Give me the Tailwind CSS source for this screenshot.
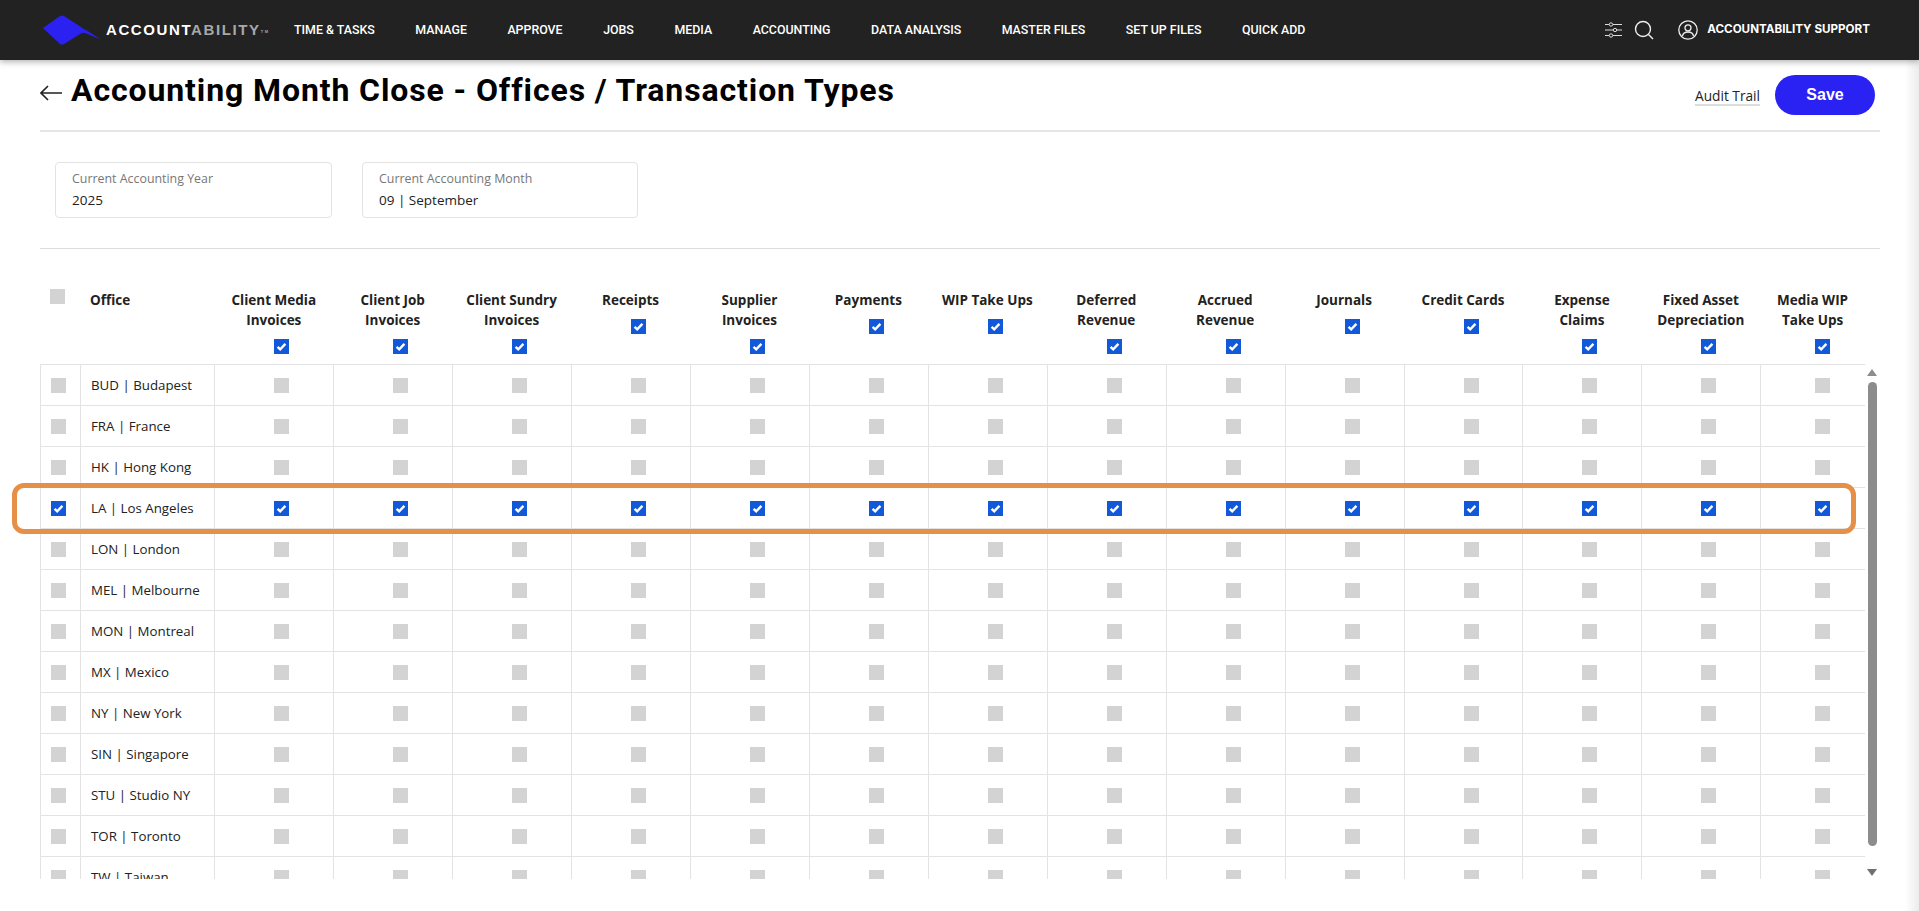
<!DOCTYPE html>
<html lang="en"><head><meta charset="utf-8"><title>Accounting Month Close</title>
<script src="https://cdn.jsdelivr.net/npm/@tailwindcss/browser@4"></script></head>
<body class="bg-white">
<svg class="hidden"><symbol id="c" viewBox="0 0 15 15"><rect width="15" height="15" fill="#1259d9"/><path d="M3.6 7.8 6.2 10.3 11.4 4.9" fill="none" stroke="#fff" stroke-width="2.4"/></symbol></svg>
<div class="relative h-[911px] w-full overflow-hidden flex flex-col font-['Open_Sans',sans-serif] text-[#222]">
<header class="h-[60px] shrink-0 bg-[#222222] shadow-[0_2px_6px_rgba(0,0,0,0.3)] z-10 flex items-center pl-[43px] pr-[49px] text-white">
  <svg class="w-[58px] h-[30px] shrink-0" viewBox="0 0 58 30"><path d="M0 13 17 1 Q19 0 21 1 L38 12 Q40 14 43 15 L58 24.500 L42 18 Q39 17 37 19 L21 29 Q19 30 17 29Z" fill="#2b22f2"/></svg>
  <div class="ml-[5px] w-[188px] font-['Liberation_Sans',sans-serif] text-[15px] font-bold tracking-[1.6px]">ACCOUNT<span class="text-[#a8a8a8]">ABILITY</span><sup class="text-[4px] text-[#a8a8a8]">TM</sup></div>
  <nav class="flex gap-[40.500px] font-['Roboto',sans-serif] text-[12.400px] font-medium whitespace-nowrap">
    <a>TIME &amp; TASKS</a><a>MANAGE</a><a>APPROVE</a><a>JOBS</a><a>MEDIA</a><a>ACCOUNTING</a><a>DATA ANALYSIS</a><a>MASTER FILES</a><a>SET UP FILES</a><a>QUICK ADD</a>
  </nav>
  <div class="ml-auto flex items-center">
    <svg class="w-[17px] h-[16px]" viewBox="0 0 17 16" fill="none" stroke="#ddd" stroke-width="1"><path d="M0 2.5h4M8 2.5h9M0 8h8M12 8h5M0 13.5h4M8 13.5h9"/><circle cx="6" cy="2.5" r="1.7"/><circle cx="10" cy="8" r="1.7"/><circle cx="6" cy="13.500" r="1.700"/></svg>
    <svg class="ml-[12px] w-[20px] h-[20px]" viewBox="0 0 20 20" fill="none" stroke="#eee" stroke-width="1.400"><circle cx="9" cy="9" r="7.500"/><path d="M14.500 14.500 19 19"/></svg>
    <svg class="ml-[24px] w-[20px] h-[20px]" viewBox="0 0 20 20" fill="none" stroke="#eee" stroke-width="1.300"><circle cx="10" cy="10" r="9.200"/><circle cx="10" cy="7.800" r="3"/><path d="M4.500 16c.5-3 2.500-4 5.500-4s5 1 5.500 4"/></svg>
    <span class="ml-[9px] font-['Inter',sans-serif] text-[11.650px] font-bold whitespace-nowrap">ACCOUNTABILITY SUPPORT</span>
  </div>
</header>
<div class="flex flex-1 min-h-0">
<main class="flex-1 min-w-0 pl-[40px] pr-[25px]">
  <div class="h-[72px] border-b-2 border-[#e6e6e6] flex items-start">
    <svg class="mt-[25px] w-[22px] h-[16px]" viewBox="0 0 22 16" fill="none" stroke="#222" stroke-width="1.600"><path d="M22 8H1M8 1 1 8l7 7"/></svg>
    <h1 class="ml-[9px] mt-[10px] font-['Roboto',sans-serif] text-[32px] tracking-[0.89px] leading-[40px] font-bold text-black whitespace-nowrap">Accounting Month Close - Offices / Transaction Types</h1>
    <a class="ml-auto mt-[27px] h-[19px] border-b-2 border-[#ddd] text-[13.700px] leading-[17px] text-[#222]">Audit Trail</a>
    <button class="ml-[15px] mr-[5px] mt-[15px] w-[100px] h-[40px] rounded-full bg-[#2a22f2] text-white font-['Liberation_Sans',sans-serif] text-[16px] font-bold">Save</button>
  </div>
  <div class="h-[117px] border-b border-[#ddd] pt-[30px] pl-[15px] flex gap-[30px] items-start">
    <div class="w-[277px] h-[56px] border border-[#e3e3e3] rounded-[4px] pl-[16px] pt-[7px]">
      <div class="text-[12.400px] leading-[18px] text-[#777]">Current Accounting Year</div>
      <div class="text-[13.500px] leading-[20px] mt-[2px]">2025</div>
    </div>
    <div class="w-[276px] h-[56px] border border-[#e3e3e3] rounded-[4px] pl-[16px] pt-[7px]">
      <div class="text-[12.400px] leading-[18px] text-[#777]">Current Accounting Month</div>
      <div class="text-[13.500px] leading-[20px] mt-[2px]">09 | September</div>
    </div>
  </div>
  <div class="grid grid-cols-[40px_134.300px_repeat(13,118.930px)_104.600px] h-[115px] pt-[41px] text-[13.500px] leading-[20px] font-bold text-center [&_i]:block [&_i]:w-[15px] [&_i]:h-[15px] [&_i]:mt-[9px] [&_i]:ml-[60px] [&>div:last-child_i]:ml-[54.600px] [&_svg]:block [&_svg]:w-[15px] [&_svg]:h-[15px]">
    <div class="pl-[10px]"><div class="w-[15px] h-[15px] bg-[#d3d3d3] -mt-[1px]"></div></div>
    <div class="text-left pl-[10px]">Office</div>
    <div>Client Media<br>Invoices<i><svg><use href="#c"/></svg></i></div>
    <div>Client Job<br>Invoices<i><svg><use href="#c"/></svg></i></div>
    <div>Client Sundry<br>Invoices<i><svg><use href="#c"/></svg></i></div>
    <div>Receipts<i><svg><use href="#c"/></svg></i></div>
    <div>Supplier<br>Invoices<i><svg><use href="#c"/></svg></i></div>
    <div>Payments<i><svg><use href="#c"/></svg></i></div>
    <div>WIP Take Ups<i><svg><use href="#c"/></svg></i></div>
    <div>Deferred<br>Revenue<i><svg><use href="#c"/></svg></i></div>
    <div>Accrued<br>Revenue<i><svg><use href="#c"/></svg></i></div>
    <div>Journals<i><svg><use href="#c"/></svg></i></div>
    <div>Credit Cards<i><svg><use href="#c"/></svg></i></div>
    <div>Expense<br>Claims<i><svg><use href="#c"/></svg></i></div>
    <div>Fixed Asset<br>Depreciation<i><svg><use href="#c"/></svg></i></div>
    <div>Media WIP<br>Take Ups<i><svg><use href="#c"/></svg></i></div>
  </div>
  <div class="flex items-start">
    <div class="w-[1825px] h-[515px] overflow-hidden border-t border-[#e3e3e3]">
      <div class="grid grid-cols-[41px_134.300px_repeat(13,118.930px)_103.600px] auto-rows-[41px] text-[13.300px] [&>div]:flex [&>div]:items-center [&>div]:pl-[59px] [&>div]:border-r [&>div]:border-b [&>div]:border-[#e3e3e3] [&>div:nth-child(16n+1)]:pl-[10px] [&>div:nth-child(16n+1)]:border-l [&>div:nth-child(16n+2)]:pl-[10px] [&>div:nth-child(16n+2)]:pt-[2px] [&>div:nth-child(16n+2)]:whitespace-nowrap [&>div:nth-child(16n)]:pl-[53.600px] [&>div:nth-child(16n)]:border-r-0 [&_i]:block [&_i]:w-[15px] [&_i]:h-[15px] [&_i]:bg-[#d3d3d3] [&_svg]:block [&_svg]:w-[15px] [&_svg]:h-[15px]">
<div><i></i></div><div>BUD | Budapest</div><div><i></i></div><div><i></i></div><div><i></i></div><div><i></i></div><div><i></i></div><div><i></i></div><div><i></i></div><div><i></i></div><div><i></i></div><div><i></i></div><div><i></i></div><div><i></i></div><div><i></i></div><div><i></i></div>
<div><i></i></div><div>FRA | France</div><div><i></i></div><div><i></i></div><div><i></i></div><div><i></i></div><div><i></i></div><div><i></i></div><div><i></i></div><div><i></i></div><div><i></i></div><div><i></i></div><div><i></i></div><div><i></i></div><div><i></i></div><div><i></i></div>
<div><i></i></div><div>HK | Hong Kong</div><div><i></i></div><div><i></i></div><div><i></i></div><div><i></i></div><div><i></i></div><div><i></i></div><div><i></i></div><div><i></i></div><div><i></i></div><div><i></i></div><div><i></i></div><div><i></i></div><div><i></i></div><div><i></i></div>
<div><i><svg><use href="#c"/></svg></i></div><div>LA | Los Angeles</div><div><i><svg><use href="#c"/></svg></i></div><div><i><svg><use href="#c"/></svg></i></div><div><i><svg><use href="#c"/></svg></i></div><div><i><svg><use href="#c"/></svg></i></div><div><i><svg><use href="#c"/></svg></i></div><div><i><svg><use href="#c"/></svg></i></div><div><i><svg><use href="#c"/></svg></i></div><div><i><svg><use href="#c"/></svg></i></div><div><i><svg><use href="#c"/></svg></i></div><div><i><svg><use href="#c"/></svg></i></div><div><i><svg><use href="#c"/></svg></i></div><div><i><svg><use href="#c"/></svg></i></div><div><i><svg><use href="#c"/></svg></i></div><div><i><svg><use href="#c"/></svg></i></div>
<div><i></i></div><div>LON | London</div><div><i></i></div><div><i></i></div><div><i></i></div><div><i></i></div><div><i></i></div><div><i></i></div><div><i></i></div><div><i></i></div><div><i></i></div><div><i></i></div><div><i></i></div><div><i></i></div><div><i></i></div><div><i></i></div>
<div><i></i></div><div>MEL | Melbourne</div><div><i></i></div><div><i></i></div><div><i></i></div><div><i></i></div><div><i></i></div><div><i></i></div><div><i></i></div><div><i></i></div><div><i></i></div><div><i></i></div><div><i></i></div><div><i></i></div><div><i></i></div><div><i></i></div>
<div><i></i></div><div>MON | Montreal</div><div><i></i></div><div><i></i></div><div><i></i></div><div><i></i></div><div><i></i></div><div><i></i></div><div><i></i></div><div><i></i></div><div><i></i></div><div><i></i></div><div><i></i></div><div><i></i></div><div><i></i></div><div><i></i></div>
<div><i></i></div><div>MX | Mexico</div><div><i></i></div><div><i></i></div><div><i></i></div><div><i></i></div><div><i></i></div><div><i></i></div><div><i></i></div><div><i></i></div><div><i></i></div><div><i></i></div><div><i></i></div><div><i></i></div><div><i></i></div><div><i></i></div>
<div><i></i></div><div>NY | New York</div><div><i></i></div><div><i></i></div><div><i></i></div><div><i></i></div><div><i></i></div><div><i></i></div><div><i></i></div><div><i></i></div><div><i></i></div><div><i></i></div><div><i></i></div><div><i></i></div><div><i></i></div><div><i></i></div>
<div><i></i></div><div>SIN | Singapore</div><div><i></i></div><div><i></i></div><div><i></i></div><div><i></i></div><div><i></i></div><div><i></i></div><div><i></i></div><div><i></i></div><div><i></i></div><div><i></i></div><div><i></i></div><div><i></i></div><div><i></i></div><div><i></i></div>
<div><i></i></div><div>STU | Studio NY</div><div><i></i></div><div><i></i></div><div><i></i></div><div><i></i></div><div><i></i></div><div><i></i></div><div><i></i></div><div><i></i></div><div><i></i></div><div><i></i></div><div><i></i></div><div><i></i></div><div><i></i></div><div><i></i></div>
<div><i></i></div><div>TOR | Toronto</div><div><i></i></div><div><i></i></div><div><i></i></div><div><i></i></div><div><i></i></div><div><i></i></div><div><i></i></div><div><i></i></div><div><i></i></div><div><i></i></div><div><i></i></div><div><i></i></div><div><i></i></div><div><i></i></div>
<div><i></i></div><div>TW | Taiwan</div><div><i></i></div><div><i></i></div><div><i></i></div><div><i></i></div><div><i></i></div><div><i></i></div><div><i></i></div><div><i></i></div><div><i></i></div><div><i></i></div><div><i></i></div><div><i></i></div><div><i></i></div><div><i></i></div>
      </div>
    </div>
    <div class="ml-[2px] w-[10px] h-[515px] pt-[5px] flex flex-col items-center">
      <svg class="w-[10px] h-[7px] shrink-0" viewBox="0 0 10 7"><path d="M5 0 10 7H0Z" fill="#8c8c8c"/></svg>
      <div class="mt-[6px] w-[9px] h-[464px] rounded-full bg-[#8c8c8c] shrink-0"></div>
      <svg class="mt-[23px] w-[10px] h-[7px] shrink-0" viewBox="0 0 10 7"><path d="M0 0H10L5 7Z" fill="#6f6f6f"/></svg>
    </div>
  </div>
</main>
<aside class="w-[14px] shrink-0 bg-linear-to-r from-[#ffffff] to-[#ececec]"></aside>
</div>
<div class="absolute left-[12px] top-[483px] w-[1844px] h-[51px] rounded-[12px] border-[5px] border-[#e58f47]"></div>
</div>
</body></html>
